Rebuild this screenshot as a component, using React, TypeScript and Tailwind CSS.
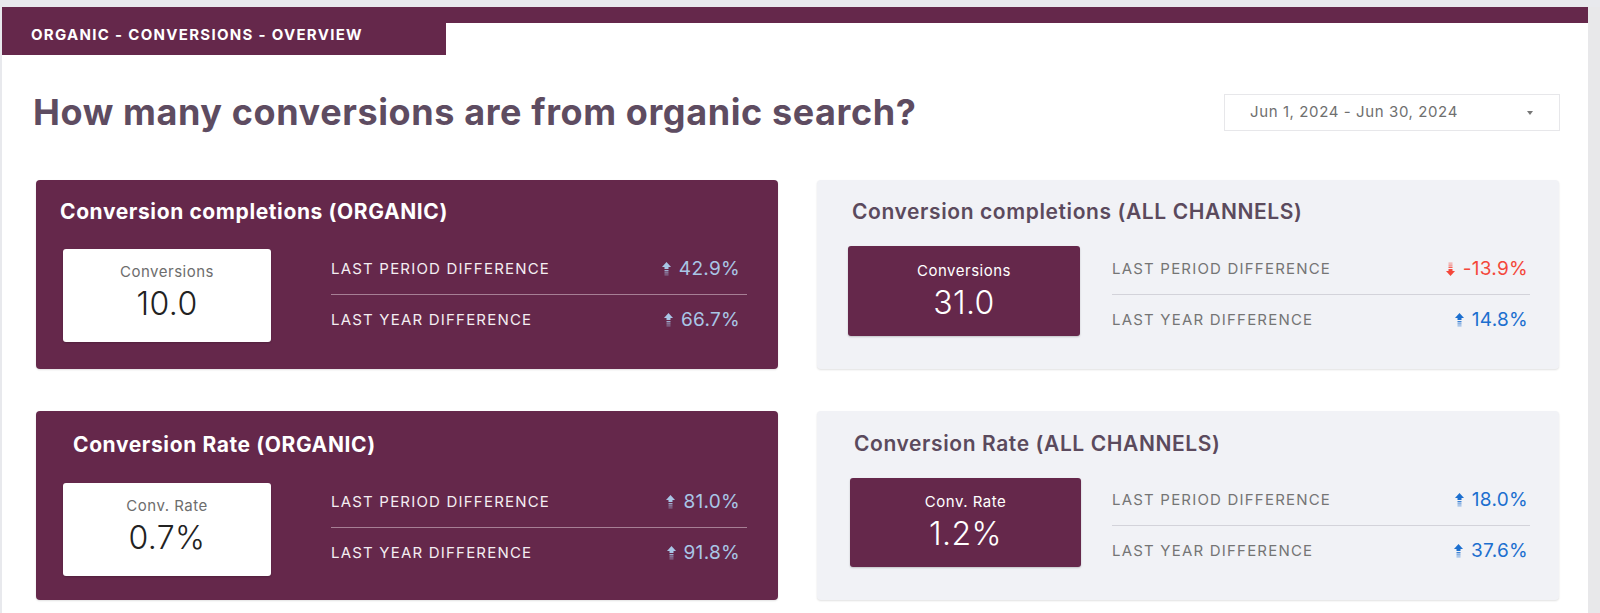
import React from 'react';

const MAROON = '#65284b';

type Stat = { label: string; value: string; dir: 'up' | 'down' };

type CardProps = {
  title: string;
  metric: string;
  amount: string;
  stats: Stat[];
  dark: boolean;
  titleLeft: string;
  titleTop: string;
  boxLeft: string;
  boxTop: string;
  boxSize: string;
  statsTop: string;
  statsRight: string;
  valueRight: string;
};

function Arrow({ dir, color }: { dir: 'up' | 'down'; color: string }) {
  return (
    <svg width="9" height="14" viewBox="0 0 9 14" className={dir === 'down' ? 'rotate-180' : ''}>
      <path d="M4.5 0 L9 5 L0 5 Z" fill={color} />
      <rect x="2.5" y="5" width="4" height="2" fill={color} />
      <rect x="2.5" y="8" width="4" height="1.4" fill={color} opacity="0.85" />
      <rect x="2.5" y="10.3" width="4" height="1.2" fill={color} opacity="0.7" />
      <rect x="2.5" y="12.4" width="4" height="1" fill={color} opacity="0.55" />
    </svg>
  );
}

function KpiCard(props: CardProps) {
  const { dark } = props;
  return (
    <div
      className={`h-[189px] rounded-[4px] shadow-[0_1px_2px_rgba(0,0,0,0.12)] ${
        dark ? 'bg-[#65284b]' : 'bg-[#f1f2f6]'
      }`}
    >
      <div
        className={`text-[21px] leading-[24px] tracking-[0.6px] ${props.titleTop} ${props.titleLeft} ${
          dark ? 'font-bold text-white' : 'font-semibold text-[#5b4a5d]'
        }`}
      >
        {props.title}
      </div>
      <div className="grid grid-cols-[295px_1fr] items-start">
        <div
          className={`flex flex-col items-center justify-center rounded-[3px] shadow-[0_1px_2px_rgba(0,0,0,0.2)] ${props.boxLeft} ${props.boxTop} ${props.boxSize} ${
            dark ? 'bg-white pb-[7px]' : 'bg-[#65284b]'
          }`}
        >
          <div
            className={`mb-[5px] text-[15px] leading-[18px] tracking-[0.5px] ${dark ? 'text-[#6d6d6d]' : 'text-white'}`}
          >
            {props.metric}
          </div>
          <div
            className={`text-[32px] font-light leading-[36px] tracking-[0.4px] ${dark ? 'text-[#222]' : 'text-white'}`}
          >
            {props.amount}
          </div>
        </div>
        <div className={`flex flex-col ${props.statsTop} ${props.statsRight}`}>
          {props.stats.map((s, i) => {
            const color = s.dir === 'down' ? '#f4473a' : dark ? '#a9c6e6' : '#1c6fcf';
            return (
              <React.Fragment key={s.label}>
                {i > 0 && <div className={`h-px ${dark ? 'bg-[#a77f95]' : 'bg-[#d3d3da]'}`} />}
                <div className={`flex h-[50px] items-center justify-between ${props.valueRight}`}>
                  <span className={`text-[15px] tracking-[1.2px] ${dark ? 'text-[#f4eef2]' : 'text-[#757575]'}`}>
                    {s.label}
                  </span>
                  <span className="flex items-center gap-[8px] text-[19px] tracking-[0.3px]" style={{ color }}>
                    <Arrow dir={s.dir} color={color} />
                    {s.value}
                  </span>
                </div>
              </React.Fragment>
            );
          })}
        </div>
      </div>
    </div>
  );
}

export default function App() {
  return (
    <div className="flex h-[613px] w-[1600px] overflow-hidden bg-[#e8e9ed] pt-[7px] font-['Inter','Liberation_Sans',sans-serif]">
      <div className="ml-[2px] h-full w-[1586px] bg-white">
        {/* Tab bar */}
        <div className="flex items-start">
          <div className="flex h-[48px] w-[444px] items-center bg-[#65284b] pl-[29px] pt-[8px] text-[15px] font-bold tracking-[1.3px] text-white">
            ORGANIC - CONVERSIONS - OVERVIEW
          </div>
          <div className="h-[16px] flex-1" style={{ background: MAROON }} />
        </div>

        {/* Heading row */}
        <div className="mt-[39px] flex h-[37px] items-center justify-between pl-[31px] pr-[28px]">
          <h1 className="text-[36px] font-bold leading-[37px] tracking-[0.6px] text-[#5e4c61]">
            How many conversions are from organic search?
          </h1>
          <div className="flex h-[37px] w-[336px] items-center justify-between border border-[#e7e7ea] pl-[25px] pr-[26px] text-[15px] tracking-[0.6px] text-[#6f6f6f]">
            <span>Jun 1, 2024 - Jun 30, 2024</span>
            <span className="h-0 w-0 border-x-[3px] border-t-[4px] border-x-transparent border-t-[#777]" />
          </div>
        </div>

        {/* KPI grid */}
        <div className="mt-[49px] grid grid-cols-2 gap-x-[39px] gap-y-[42px] pl-[34px] pr-[29px]">
          <KpiCard
            dark
            title="Conversion completions (ORGANIC)"
            metric="Conversions"
            amount="10.0"
            stats={[
              { label: 'LAST PERIOD DIFFERENCE', value: '42.9%', dir: 'up' },
              { label: 'LAST YEAR DIFFERENCE', value: '66.7%', dir: 'up' },
            ]}
            titleLeft="pl-[24px]"
            titleTop="pt-[20px] h-[44px]"
            boxLeft="ml-[27px]"
            boxTop="mt-[25px]"
            boxSize="w-[208px] h-[93px]"
            statsTop="mt-[20px]"
            statsRight="mr-[31px]"
            valueRight="pr-[7px]"
          />
          <KpiCard
            dark={false}
            title="Conversion completions (ALL CHANNELS)"
            metric="Conversions"
            amount="31.0"
            stats={[
              { label: 'LAST PERIOD DIFFERENCE', value: '-13.9%', dir: 'down' },
              { label: 'LAST YEAR DIFFERENCE', value: '14.8%', dir: 'up' },
            ]}
            titleLeft="pl-[35px]"
            titleTop="pt-[20px] h-[44px]"
            boxLeft="ml-[31px]"
            boxTop="mt-[22px]"
            boxSize="w-[232px] h-[90px]"
            statsTop="mt-[20px]"
            statsRight="mr-[29px]"
            valueRight="pr-[2px]"
          />
          <KpiCard
            dark
            title="Conversion Rate (ORGANIC)"
            metric="Conv. Rate"
            amount="0.7%"
            stats={[
              { label: 'LAST PERIOD DIFFERENCE', value: '81.0%', dir: 'up' },
              { label: 'LAST YEAR DIFFERENCE', value: '91.8%', dir: 'up' },
            ]}
            titleLeft="pl-[37px]"
            titleTop="pt-[22px] h-[46px]"
            boxLeft="ml-[27px]"
            boxTop="mt-[26px]"
            boxSize="w-[208px] h-[93px]"
            statsTop="mt-[20px]"
            statsRight="mr-[31px]"
            valueRight="pr-[7px]"
          />
          <KpiCard
            dark={false}
            title="Conversion Rate (ALL CHANNELS)"
            metric="Conv. Rate"
            amount="1.2%"
            stats={[
              { label: 'LAST PERIOD DIFFERENCE', value: '18.0%', dir: 'up' },
              { label: 'LAST YEAR DIFFERENCE', value: '37.6%', dir: 'up' },
            ]}
            titleLeft="pl-[37px]"
            titleTop="pt-[21px] h-[45px]"
            boxLeft="ml-[33px]"
            boxTop="mt-[22px]"
            boxSize="w-[231px] h-[89px]"
            statsTop="mt-[19px]"
            statsRight="mr-[29px]"
            valueRight="pr-[2px]"
          />
        </div>
      </div>
      <div className="h-full w-[12px] bg-[#e8e8ea]" />
    </div>
  );
}
